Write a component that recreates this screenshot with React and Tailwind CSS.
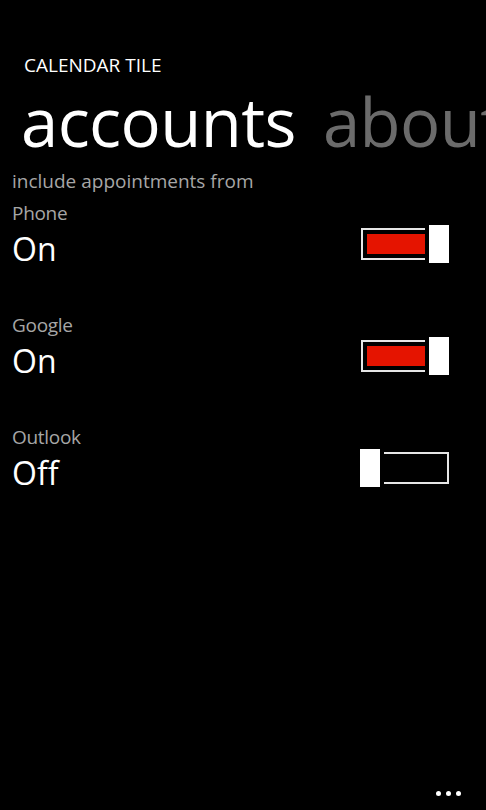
import React from 'react'

const accounts = [
  { name: 'Phone', on: true },
  { name: 'Google', on: true },
  { name: 'Outlook', on: false },
]

function Toggle({ on }) {
  if (on) {
    return (
      <div className="flex items-center h-[38px]">
        <div className="w-[64px] h-[32px] border-2 border-r-0 border-[#e6e6e6] pl-[4px] py-[4px]">
          <div className="w-full h-full bg-[#e51400]" />
        </div>
        <div className="w-[20px] h-[38px] bg-white ml-[4px]" />
      </div>
    )
  }
  return (
    <div className="flex items-center h-[38px]">
      <div className="w-[20px] h-[38px] bg-white" />
      <div className="w-[65px] h-[32px] border-2 border-l-0 border-[#e6e6e6] ml-[4px]" />
    </div>
  )
}

export default function App() {
  return (
    <div
      className="h-screen w-full bg-black text-white flex flex-col overflow-hidden"
      style={{ fontFamily: "'Open Sans', 'Noto Sans', sans-serif" }}
    >
      {/* Title */}
      <div className="pl-[24px] pt-[54px] text-[19px] leading-[22px]">CALENDAR TILE</div>

      {/* Pivot headers */}
      <div className="flex whitespace-nowrap pl-[21px] mt-[14px] text-[67px] leading-[62px] tracking-[-0.6px]">
        <span className="text-white">accounts</span>
        <span className="text-[#6b6b6b] ml-[27px]">about</span>
      </div>

      {/* Content */}
      <div className="pl-[12px] pr-[37px] mt-[17px]">
        <div className="text-[19px] leading-[24px] text-[#a6a6a6] mb-[8px]">include appointments from</div>
        <div className="flex flex-col">
          {accounts.map((a) => (
            <div key={a.name} className="h-[112px]">
              <div className="text-[19px] leading-[24px] text-[#a6a6a6] tracking-[-0.3px]">{a.name}</div>
              <div className="flex items-start justify-between">
                <span className="text-[32px] leading-[40px] mt-[4px]">{a.on ? 'On' : 'Off'}</span>
                <Toggle on={a.on} />
              </div>
            </div>
          ))}
        </div>
      </div>

      {/* App bar dots */}
      <div className="mt-auto flex justify-end gap-[5px] pr-[25px] pb-[14px]">
        <div className="w-[5px] h-[5px] rounded-full bg-white" />
        <div className="w-[5px] h-[5px] rounded-full bg-white" />
        <div className="w-[5px] h-[5px] rounded-full bg-white" />
      </div>
    </div>
  )
}
